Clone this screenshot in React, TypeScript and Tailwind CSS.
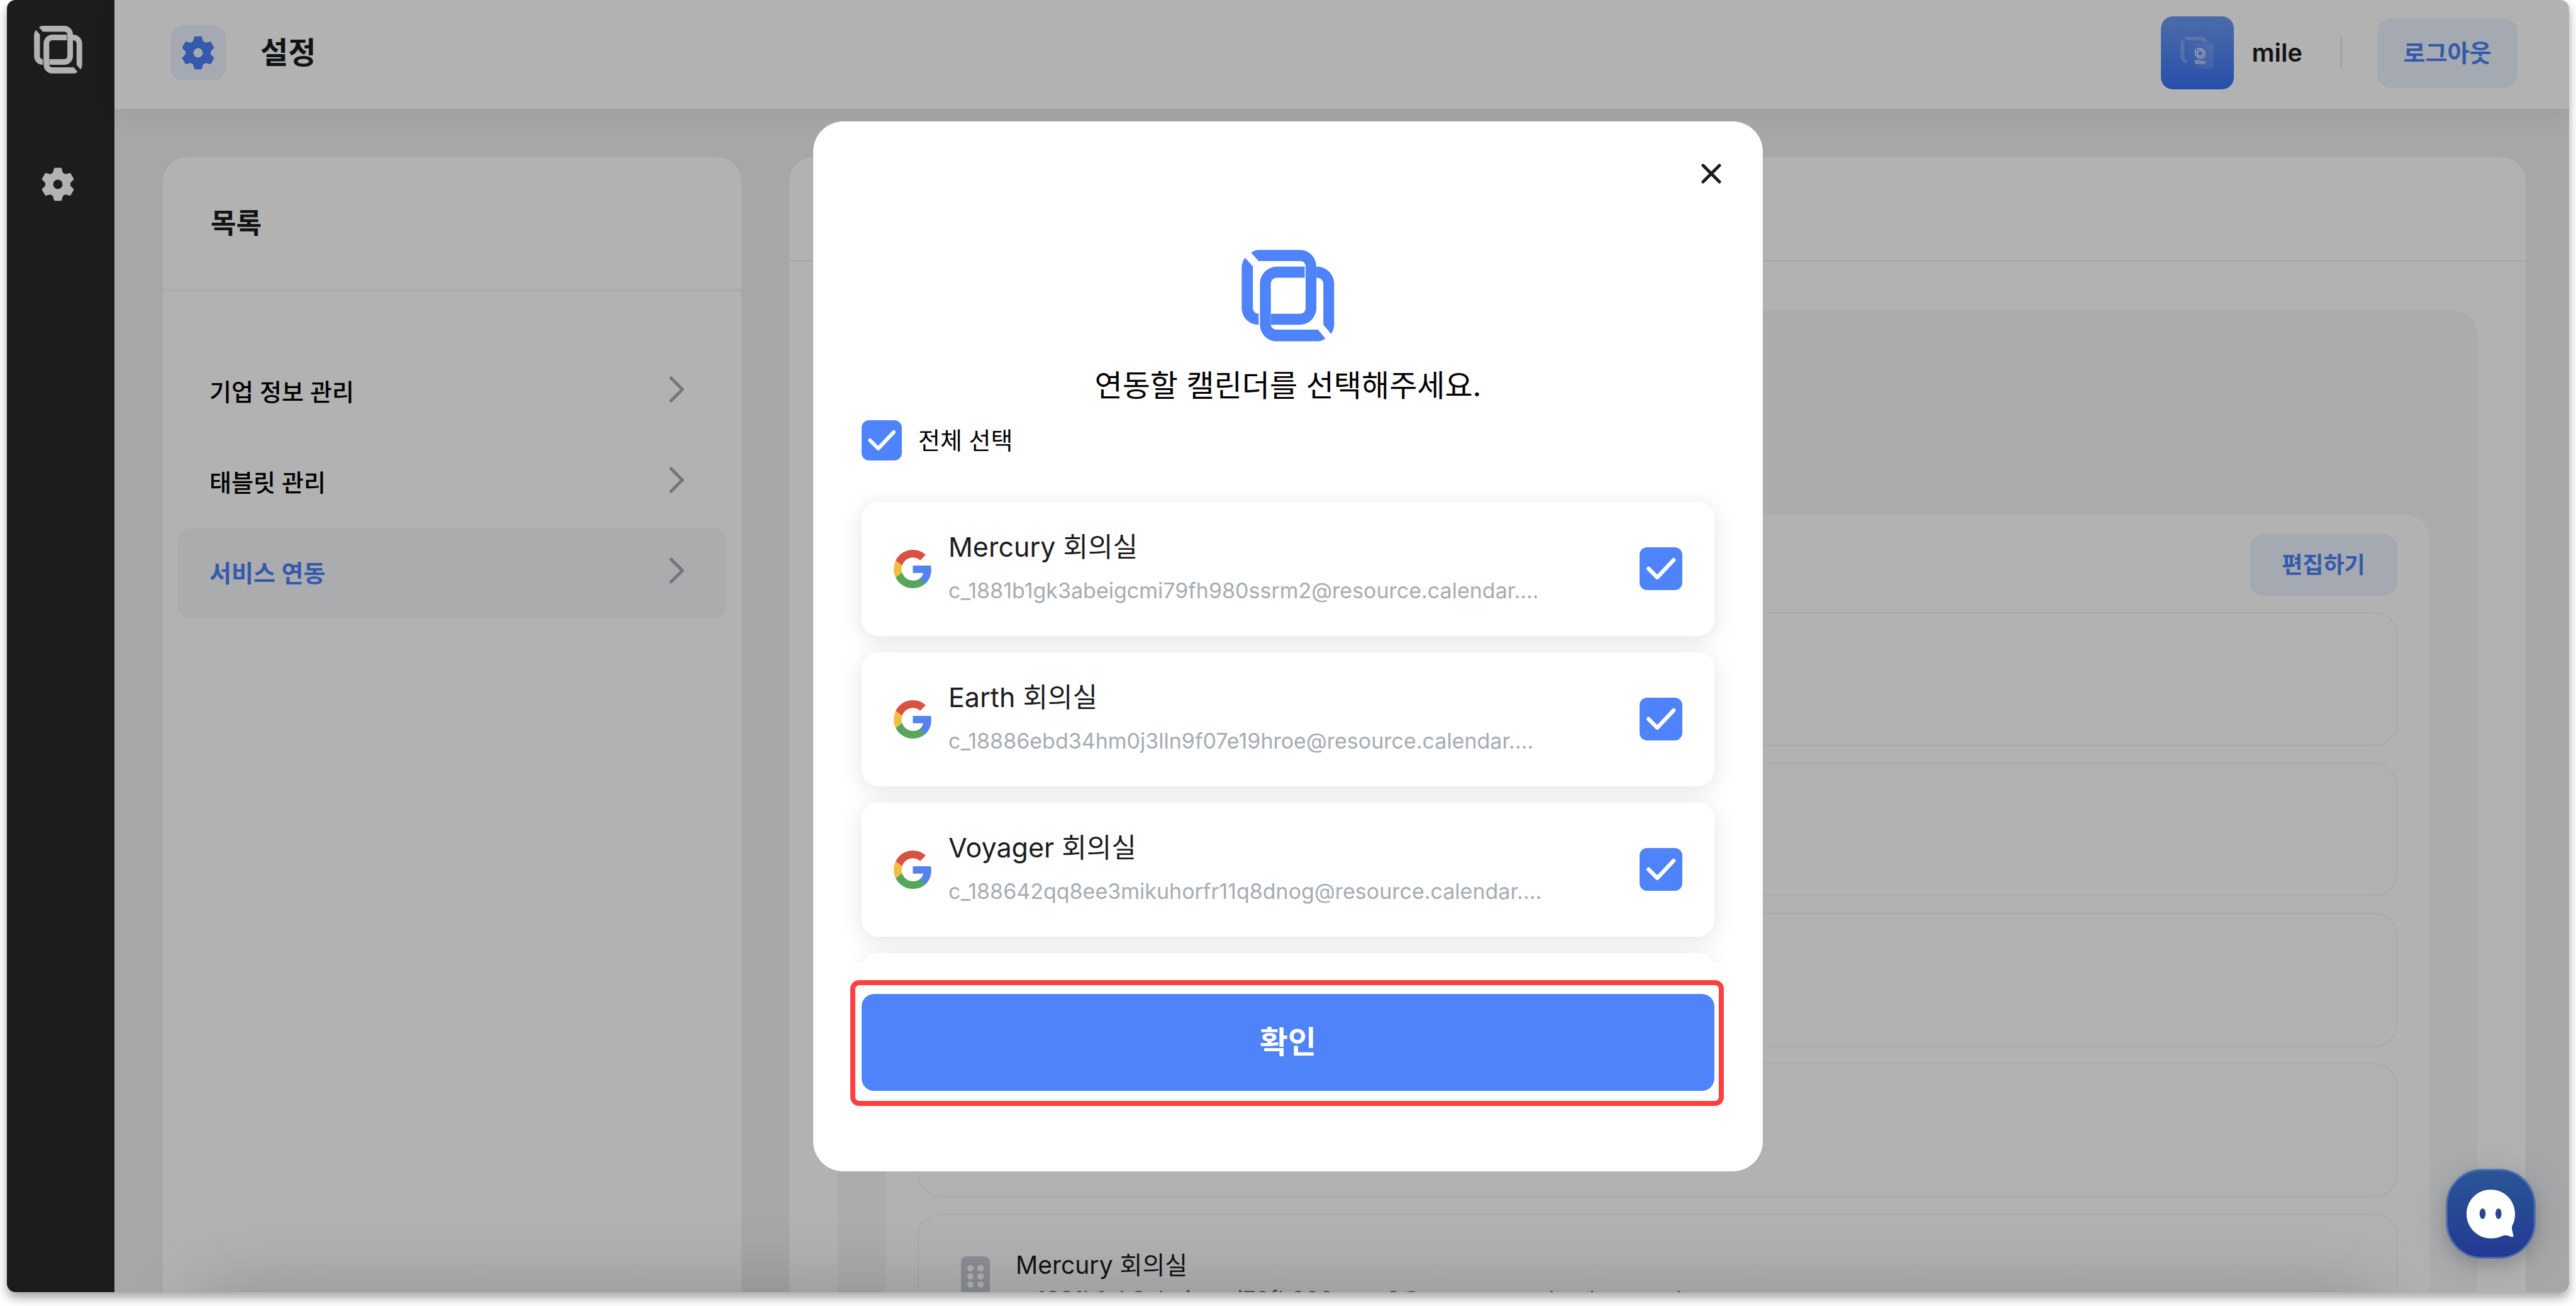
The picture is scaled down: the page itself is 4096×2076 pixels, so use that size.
import React, { useState } from "react";

const rooms = [
  { name: "Mercury 회의실", mail: "c_1881b1gk3abeigcmi79fh980ssrm2@resource.calendar...." },
  { name: "Earth 회의실", mail: "c_18886ebd34hm0j3lln9f07e19hroe@resource.calendar...." },
  { name: "Voyager 회의실", mail: "c_188642qq8ee3mikuhorfr11q8dnog@resource.calendar...." },
];

const menu = [
  { label: "기업 정보 관리", active: false },
  { label: "태블릿 관리", active: false },
  { label: "서비스 연동", active: true },
];

function MileMark({ className }: { className?: string }) {
  return (
    <svg viewBox="386 176 622 615" className={className} fill="currentColor" aria-hidden="true">
      <path d="M450 195Q475 177 505 177H775C840 177 887 228 887 290V565C887 630 838 678 775 678H583V605H775C800 605 815 588 815 565V290C815 266 800 252 775 252H500Z" />
      <path d="M410 230L462 288V565C462 588 478 605 500 605V678C436 678 387 630 387 565V290Q389 255 410 230Z" />
      <path d="M809 289H625C560 289 509 340 509 405V675C509 740 560 789 622 789H893Q922 789 948 771L898 711H625C600 711 582 696 582 675V405C582 380 600 363 625 363H809Z" />
      <path d="M887 289C955 289 1006 340 1006 403V680Q1004 713 985 739L934 678V405C934 380 915 363 887 363Z" />
    </svg>
  );
}

function Gear({ className }: { className?: string }) {
  return (
    <svg viewBox="-38 -38 76 76" className={className} aria-hidden="true">
      <circle r="19.3" fill="none" stroke="currentColor" strokeWidth="17.6" />
      {[0, 60, 120, 180, 240, 300].map((a) => (
        <path
          key={a}
          d="M-7 -35.5H7L10 -25L15 -20H-15L-10 -25Z"
          transform={`rotate(${a})`}
          fill="currentColor"
          stroke="currentColor"
          strokeWidth="3"
          strokeLinejoin="round"
        />
      ))}
    </svg>
  );
}

function GoogleMark({ className }: { className?: string }) {
  return (
    <svg viewBox="0 0 18 18" className={className} aria-hidden="true">
      <path fill="#5383ec" d="M17.64 9.2c0-.637-.057-1.251-.164-1.84H9v3.481h4.844c-.209 1.125-.843 2.078-1.796 2.717v2.258h2.908c1.702-1.567 2.684-3.874 2.684-6.615z" />
      <path fill="#58a55c" d="M9 18c2.43 0 4.467-.806 5.956-2.18l-2.908-2.259c-.806.54-1.837.86-3.048.86-2.344 0-4.328-1.584-5.036-3.711H.957v2.332A8.997 8.997 0 0 0 9 18z" />
      <path fill="#f1be42" d="M3.964 10.71A5.41 5.41 0 0 1 3.682 9c0-.593.102-1.17.282-1.71V4.958H.957A8.996 8.996 0 0 0 0 9c0 1.452.348 2.827.957 4.042l3.007-2.332z" />
      <path fill="#d95140" d="M9 3.58c1.321 0 2.508.454 3.44 1.345l2.582-2.58C13.463.891 11.426 0 9 0A8.997 8.997 0 0 0 .957 4.958L3.964 7.29C4.672 5.163 6.656 3.58 9 3.58z" />
    </svg>
  );
}

function Avatar() {
  return (
    <svg viewBox="0 0 164 164" className="size-[116px]" role="img" aria-label="mile">
      <defs>
        <linearGradient id="av-bg" x1="0" y1="0" x2="0" y2="1">
          <stop offset="0" stopColor="#6e9af3" />
          <stop offset="1" stopColor="#3972f4" />
        </linearGradient>
        <linearGradient id="av-fade" x1="1" y1="0" x2="0" y2="1">
          <stop offset="0" stopColor="#fff" stopOpacity="0.28" />
          <stop offset="1" stopColor="#fff" stopOpacity="0.04" />
        </linearGradient>
      </defs>
      <rect width="164" height="164" rx="27" fill="url(#av-bg)" />
      <path d="M51 48Q54 46 58 46H92Q103 47 105 58L93 60Q92 54 86 54H58Z" fill="#fff" fillOpacity="0.22" />
      <path d="M48 52L53 58V92Q54 98 60 98L58 106Q44 103 44 90V62Q44 55 48 52Z" fill="#fff" fillOpacity="0.22" />
      <rect x="60" y="60" width="58" height="58" rx="9" fill="#4478ef" />
      <rect x="60" y="60" width="58" height="58" rx="9" fill="url(#av-fade)" />
      <g transform="translate(76.5 71.5) scale(0.0375) translate(-386 -176)" fill="#fff" fillOpacity="0.75">
        <path d="M450 195Q475 177 505 177H775C840 177 887 228 887 290V565C887 630 838 678 775 678H583V605H775C800 605 815 588 815 565V290C815 266 800 252 775 252H500Z" />
        <path d="M410 230L462 288V565C462 588 478 605 500 605V678C436 678 387 630 387 565V290Q389 255 410 230Z" />
        <path d="M809 289H625C560 289 509 340 509 405V675C509 740 560 789 622 789H893Q922 789 948 771L898 711H625C600 711 582 696 582 675V405C582 380 600 363 625 363H809Z" />
        <path d="M887 289C955 289 1006 340 1006 403V680Q1004 713 985 739L934 678V405C934 380 915 363 887 363Z" />
      </g>
      <text x="88.5" y="107" textAnchor="middle" fontSize="12" fontWeight="700" fill="#fff" fillOpacity="0.75">
        Mile
      </text>
    </svg>
  );
}

function Chevron() {
  return (
    <svg viewBox="0 0 24 50" className="h-[50px] w-[24px] text-[#a5acb3]" fill="none" aria-hidden="true">
      <path d="M3 3L21 21L3 39" stroke="currentColor" strokeWidth="5" strokeLinecap="round" strokeLinejoin="round" />
    </svg>
  );
}

function Building() {
  return (
    <svg viewBox="0 0 46 66" className="h-[66px] w-[46px]" aria-hidden="true">
      <path d="M10 0H36Q46 0 46 10V66H0V10Q0 0 10 0Z" fill="#c9ced5" />
      {[19, 32, 45].map((y) => (
        <g key={y} fill="#fff">
          <circle cx="15" cy={y} r="5" />
          <circle cx="31" cy={y} r="5" />
        </g>
      ))}
    </svg>
  );
}

function Check({
  id,
  size,
  checked,
  onChange,
}: {
  id: string;
  size: string;
  checked: boolean;
  onChange: () => void;
}) {
  return (
    <span className={`relative block shrink-0 ${size}`}>
      <input
        id={id}
        type="checkbox"
        checked={checked}
        onChange={onChange}
        className="peer block size-full appearance-none rounded-xl border-2 border-[#4e83f9] bg-white checked:bg-[#4e83f9]"
      />
      <svg
        viewBox="0 0 64 64"
        fill="none"
        aria-hidden="true"
        className="pointer-events-none absolute inset-0 hidden size-full peer-checked:block"
      >
        <path d="M13.5 32L26.5 45L51 19" stroke="#fff" strokeWidth="6" strokeLinecap="round" strokeLinejoin="round" />
      </svg>
    </span>
  );
}

export default function App() {
  const [picked, setPicked] = useState([true, true, true]);
  const all = picked.every(Boolean);

  return (
    <div className="h-screen overflow-hidden bg-white px-[11px] pb-[22px] font-['Inter','Noto_Sans_CJK_KR',sans-serif] text-[#1b1c1e]">
      <div className="relative flex h-full overflow-hidden rounded-[14px] bg-[#edeff1] shadow-[0_9px_16px_rgba(0,0,0,0.35)]">
        <aside className="flex w-[171px] shrink-0 flex-col items-center bg-[#27292b] pt-[41px] pr-[9px] text-white">
          <a href="#home" aria-label="Mile">
            <MileMark className="h-[76px] w-[77px]" />
          </a>
          <nav className="mt-[149px]">
            <a href="#settings" aria-label="설정">
              <Gear className="size-[54px]" />
            </a>
          </nav>
        </aside>

        <div className="flex min-w-0 flex-1 flex-col">
          <header className="relative flex h-[173px] shrink-0 items-center bg-white pr-[82px] pb-[5px] pl-[89px] shadow-[0_6px_36px_rgba(0,0,0,0.07)]">
            <span className="grid size-[88px] place-items-center rounded-[20px] bg-[#ecf3fe] text-[#4c81f7]">
              <Gear className="size-[54px]" />
            </span>
            <h1 className="ml-[55px] text-[48px] leading-[60px] font-bold">설정</h1>
            <div className="ml-auto flex items-center">
              <Avatar />
              <span className="ml-[28px] text-[40px] leading-[48px] font-semibold">mile</span>
              <span className="mr-[56px] ml-[60px] h-[48px] w-[3px] bg-[#eceef0]" />
              <button type="button" className="h-[111px] w-[223px] rounded-[22px] bg-[#ecf3fe] text-[38px] font-semibold text-[#4c81f7]">
                로그아웃
              </button>
            </div>
          </header>

          <main className="flex min-h-0 flex-1 gap-[76px] pt-[77px] pr-[69px] pl-[77px]">
            <section className="w-[920px] shrink-0 rounded-t-[38px] bg-white">
              <h2 className="flex h-[214px] items-center border-b-[5px] border-[#f6f7f8] pl-[76px] text-[44px] leading-[60px] font-bold">목록</h2>
              <ul className="px-[23px] pt-[87px]">
                {menu.map((m) => (
                  <li key={m.label}>
                    <a
                      href="#menu"
                      className={
                        m.active
                          ? "flex h-[144px] items-center justify-between rounded-[22px] bg-[#f5f7f9] pr-[68px] pl-[51px] text-[38px] font-semibold text-[#4c81f7]"
                          : "flex h-[144px] items-center justify-between rounded-[22px] pr-[68px] pl-[51px] text-[38px] font-medium text-black"
                      }
                    >
                      {m.label}
                      <Chevron />
                    </a>
                  </li>
                ))}
              </ul>
            </section>

            <section className="flex min-w-0 flex-1 flex-col rounded-t-[38px] bg-white">
              <div className="h-[166px] shrink-0 border-b-[3px] border-[#f0f1f2]" />
              <div className="mx-[77px] mt-[77px] min-h-0 flex-1 rounded-t-[38px] bg-[#f5f7f9] px-[76px] pt-[325px]">
                <div className="h-full overflow-hidden rounded-t-[38px] bg-white px-[51px] pt-[31px]">
                  <button
                    type="button"
                    className="ml-auto block h-[98px] w-[235px] rounded-[22px] bg-[#ecf3fe] text-[36px] font-semibold text-[#4c81f7]"
                  >
                    편집하기
                  </button>
                  <div className="mt-[26px] flex flex-col gap-[26px]">
                    {[1, 2, 3, 4].map((n) => (
                      <div key={n} className="h-[213px] rounded-[36px] border-2 border-[#f3f4f4]" />
                    ))}
                    <div className="flex h-[213px] items-start rounded-[36px] border-2 border-[#f3f4f4] pl-[67px]">
                      <div className="mt-[66px]">
                        <Building />
                      </div>
                      <div className="mt-[47px] ml-[41px]">
                        <p className="text-[39px] leading-[66px]">Mercury 회의실</p>
                        <p className="text-[36px] leading-[42px] text-[#70767d]">c_1881b1gk3abeigcmi79fh980ssrm2@resource.calendar.google.com</p>
                      </div>
                    </div>
                  </div>
                </div>
              </div>
            </section>
          </main>
        </div>

        <div className="absolute inset-0 flex items-center justify-center bg-black/30">
          <div className="absolute inset-x-[300px] top-full h-[200px] rounded-[40px] shadow-[0_0_120px_rgba(0,0,0,0.2)]" />
          <div role="dialog" aria-modal="true" aria-labelledby="pick-title" className="relative flex w-[1510px] flex-col rounded-[48px] bg-white px-[77px] pt-[204px] pb-[128px]">
            <button type="button" aria-label="닫기" className="absolute top-[63px] right-[62px] p-1">
              <svg viewBox="0 0 32 32" className="size-[32px]" fill="none" aria-hidden="true">
                <path d="M3 3L29 29M29 3L3 29" stroke="#1b1c1e" strokeWidth="5" strokeLinecap="round" />
              </svg>
            </button>
            <MileMark className="h-[146px] w-[148px] self-center text-[#4e83f9]" />
            <h2 id="pick-title" className="mt-[34px] text-center text-[48px] leading-[72px] text-black">
              연동할 캘린더를 선택해주세요.
            </h2>
            <label htmlFor="pick-all" className="mt-[19px] flex items-center gap-[26px] self-start text-[38px] leading-[64px] text-black">
              <Check id="pick-all" size="size-[64px]" checked={all} onChange={() => setPicked(picked.map(() => !all))} />
              전체 선택
            </label>
            <ul className="-mx-[28px] mt-[51px] flex h-[747px] flex-col gap-[26px] overflow-hidden px-[28px] pt-[15px]">
              {rooms.map((r, i) => (
                <li key={r.name} className="shrink-0 rounded-[26px] bg-white shadow-[0_6px_36px_rgba(0,0,0,0.11)]">
                  <label htmlFor={`room-${i}`} className="flex h-[213px] items-center px-[51px]">
                    <GoogleMark className="size-[61px]" />
                    <span className="ml-[26px] min-w-0 flex-1">
                      <span className="block text-[43px] leading-[70px]">{r.name}</span>
                      <span className="block text-[34px] leading-[70px] text-[#a5acb4]">{r.mail}</span>
                    </span>
                    <Check
                      id={`room-${i}`}
                      size="size-[68px]"
                      checked={picked[i]}
                      onChange={() => setPicked(picked.map((p, k) => (k === i ? !p : p)))}
                    />
                  </label>
                </li>
              ))}
              <li className="h-[213px] shrink-0 rounded-[26px] bg-white shadow-[0_6px_36px_rgba(0,0,0,0.11)]" />
            </ul>
            <div className="relative mt-[50px]">
              <button type="button" className="block h-[154px] w-full rounded-[20px] bg-[#4e83f9] text-[49px] font-bold text-white">
                확인
              </button>
              <span className="pointer-events-none absolute -top-[22px] -right-[15px] -bottom-[24px] -left-[18px] rounded-[14px] border-8 border-[#ff3f3f]" />
            </div>
          </div>
        </div>

        <button
          type="button"
          aria-label="채팅 상담"
          className="absolute right-[53px] bottom-[53px] grid size-[143px] place-items-center rounded-[58px] border-[3px] border-[#4f6fb0] bg-linear-to-b from-[#2a5596] to-[#233992] shadow-[0_10px_60px_rgba(0,0,0,0.12),0_10px_20px_rgba(0,0,0,0.12)]"
        >
          <svg viewBox="0 0 77 78" className="h-[78px] w-[77px]" aria-hidden="true">
            <path
              d="M38.5 0C60 0 77 17 77 38.8C77 47 75 53 72.5 57.5Q71.5 61 72.5 65L74.5 72.5Q74.8 76 71.5 75.3L66 73.3Q61.5 72 58 73.2C52 76 46 77.5 38.5 77.5C17 77.5 0 60 0 38.8C0 17 17 0 38.5 0Z"
              fill="#fff"
            />
            <ellipse cx="25.5" cy="38.3" rx="4.8" ry="8.4" fill="#274694" />
            <ellipse cx="50.8" cy="38.3" rx="4.8" ry="8.4" fill="#274694" />
          </svg>
        </button>
      </div>
    </div>
  );
}
